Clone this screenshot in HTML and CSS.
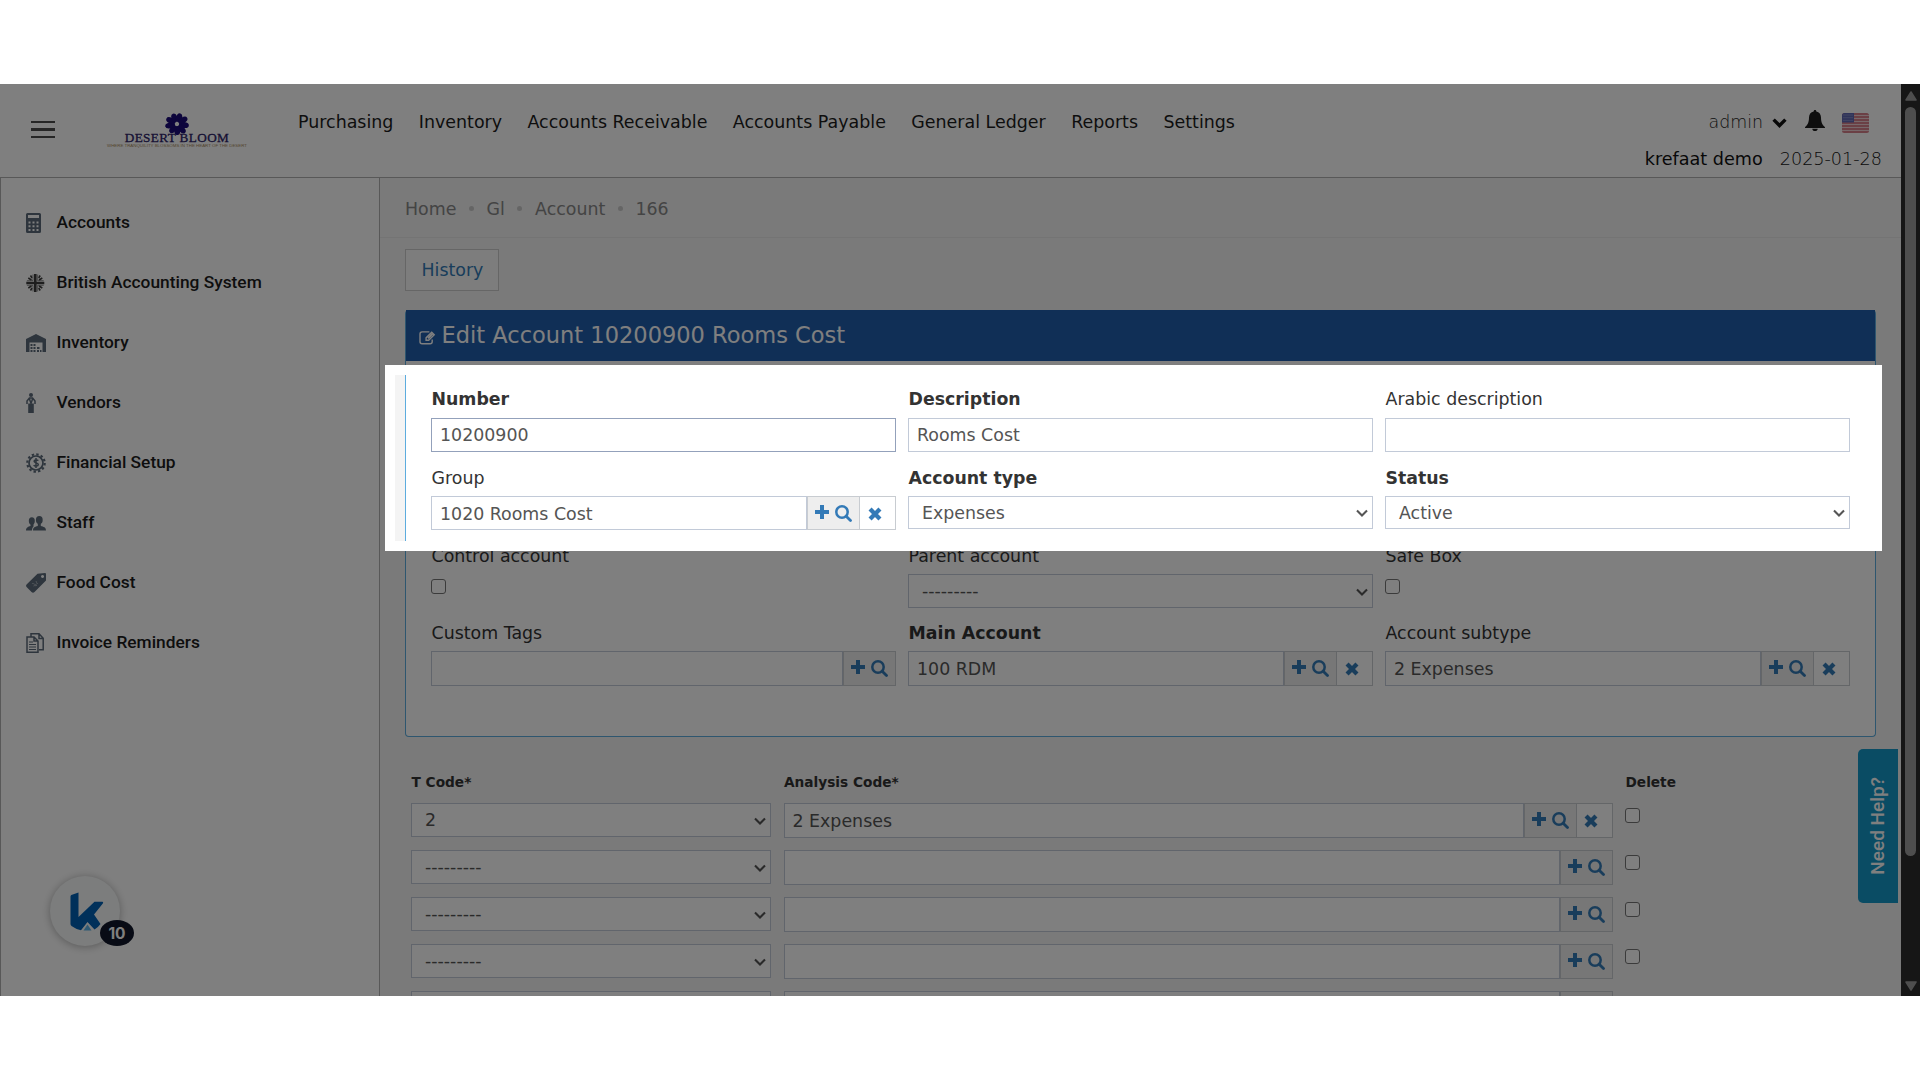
FILE: index.html
```html
<!DOCTYPE html>
<html lang="en">
<head>
<meta charset="utf-8">
<title>Edit Account</title>
<link rel="stylesheet" href="styles.css">
</head>
<body>
<svg class="sprite" aria-hidden="true">
  <symbol id="plus" viewBox="0 0 14 14"><path d="M5 0h4v5h5v4H9v5H5V9H0V5h5z"/></symbol>
  <symbol id="search" viewBox="0 0 17 17"><circle cx="7" cy="7" r="5.7" fill="none" stroke="currentColor" stroke-width="2.5"/><path d="M11.2 11.2l4.3 4.3" stroke="currentColor" stroke-width="2.8" stroke-linecap="round"/></symbol>
  <symbol id="times" viewBox="0 0 13 13"><path d="M1.900 1.900l9.200 9.200M11.100 1.900l-9.200 9.200" stroke="currentColor" stroke-width="4"/></symbol>
  <symbol id="chev" viewBox="0 0 12 8"><path d="M1 1.4l5 5 5-5" fill="none" stroke="currentColor" stroke-width="2.1"/></symbol>
</svg>
<div class="stage">
  <div class="page">
    <header class="top">
      <div class="burger"><i></i><i></i><i></i></div>
      <div class="logo">
        <svg width="28" height="22" viewBox="-14 -11.500 28 23">
          <g fill="#1a0a78"><ellipse cx="7.3" rx="5.2" ry="3.1" transform="rotate(8)"/><ellipse cx="7.3" rx="5.2" ry="3.1" transform="rotate(48)"/><ellipse cx="6.900" rx="4.700" ry="3.1" transform="rotate(88)"/><ellipse cx="6.900" rx="4.700" ry="3.1" transform="rotate(128)"/><ellipse cx="7.3" rx="5.2" ry="3.1" transform="rotate(168)"/><ellipse cx="7.3" rx="5.2" ry="3.1" transform="rotate(208)"/><ellipse cx="6.900" rx="4.700" ry="3.1" transform="rotate(248)"/><ellipse cx="6.900" rx="4.700" ry="3.1" transform="rotate(288)"/><ellipse cx="7.3" rx="5.2" ry="3.1" transform="rotate(328)"/></g>
        </svg>
        <b>DESERT BLOOM</b>
        <small>WHERE TRANQUILITY BLOSSOMS IN THE HEART OF THE DESERT</small>
      </div>
      <nav class="menu"><a>Purchasing</a><a>Inventory</a><a>Accounts Receivable</a><a>Accounts Payable</a><a>General Ledger</a><a>Reports</a><a>Settings</a></nav>
      <div class="user">
        <div class="user-row first">
          <span class="thin">admin</span>
          <svg class="u-chev" width="15" height="10" viewBox="0 0 15 10"><path d="M1.6 1.6l5.9 5.9 5.9-5.9" fill="none" stroke="#111" stroke-width="3.4"/></svg>
          <svg class="bell" width="20" height="21" viewBox="0 0 20 21"><path d="M10 0c.9 0 1.4.6 1.3 1.5 3 .6 4.700 3 4.700 6 0 5 1.500 7.500 4 9.700V18H0v-.8c2.500-2.200 4-4.700 4-9.700 0-3 1.700-5.400 4.700-6C8.600.6 9.100 0 10 0zM7.300 18.700h5.400c0 1.400-1.200 2.300-2.700 2.300s-2.700-.9-2.700-2.300z" fill="#1c1c1c"/></svg>
          <svg class="flag" width="27" height="20" viewBox="0 0 27 20"><clipPath id="fc"><rect width="27" height="20" rx="2.500"/></clipPath><g clip-path="url(#fc)"><rect width="27" height="20" fill="#efd0d4"/><path d="M0 1h27M0 4h27M0 7h27M0 10h27M0 13h27M0 16h27M0 19h27" stroke="#cf6672" stroke-width="1.700"/><rect width="12" height="9.500" fill="#6068b4"/><path d="M1.500 2h9M1.500 4.700h9M1.500 7.400h9" stroke="#a9aed8" stroke-width="1" stroke-dasharray="1 1"/></g></svg>
        </div>
        <div class="user-row second"><span>krefaat demo</span><span class="thin">2025-01-28</span></div>
      </div>
    </header>
    <div class="body">
      <aside class="side">
        <a><svg width="20" height="20" viewBox="0 0 20 20"><path fill-rule="evenodd" d="M1.500 0h12Q15 0 15 1.500v17q0 1.500-1.500 1.500h-12Q0 20 0 18.500v-17Q0 0 1.500 0zM2 2v3h11V2zM2.500 8.500v2h2v-2zm4 0v2h2v-2zm4 0v2h2v-2zm-8 3.700v2h2v-2zm4 0v2h2v-2zm4 0v2h2v-2zm-8 3.700v2h2v-2zm4 0v2h2v-2zm4 0v2h2v-2z"/></svg><span>Accounts</span></a>
        <a><svg width="20" height="20" viewBox="0 0 20 20"><g stroke="#3c3c3c" fill="none"><path d="M9.300 1v18M.3 10h18" stroke-width="2.600"/><path d="M7 1.500v6.200H.9M11.700 1.500v6.200h6M7 18.500v-6.200H.9M11.700 18.500v-6.200h6" stroke-width=".6"/><path d="M2.300 5l3.200 2M16.300 5l-3.200 2M2.300 15l3.200-2M16.300 15l-3.200-2M4.500 2.500l1.500 2.500M14.200 2.500l-1.500 2.500M4.500 17.500l1.500-2.500M14.200 17.500l-1.500-2.500" stroke-width="1.500"/></g></svg><span>British Accounting System</span></a>
        <a><svg width="20" height="20" viewBox="0 0 20 20"><path d="M0 6l10-5 10 5v13h-3.500V9.500h-13V19H0z"/><path d="M4.500 11h2v2h-2zM7.500 11h2v2h-2zM4.500 14h2v2h-2zM7.500 14h2v2h-2zM11 14h2.500v2H11zM4.500 17h2v2h-2zM7.500 17h2v2h-2zM11 17h2v2h-2zM14 17h1.500v2H14z"/></svg><span>Inventory</span></a>
        <a><svg width="20" height="20" viewBox="0 0 20 20"><circle cx="5" cy="2" r="2"/><path d="M2.200 10.500h5.600V20H2.200z"/><path d="M1 11V8l2.400-3h3.200L9 8v3M3.300 5.500l1.700 5 1.700-5" fill="none" stroke="#5c6b7a" stroke-width="1.500"/></svg><span>Vendors</span></a>
        <a><svg width="20" height="20" viewBox="0 0 20 20"><circle cx="10" cy="10" r="8.700" fill="none" stroke="#5c6b7a" stroke-width="2.200" stroke-dasharray="2.400 2.155"/><circle cx="10" cy="10" r="7" fill="none" stroke="#5c6b7a" stroke-width="1.700"/><path d="M12.300 7.700c-.6-1-4.200-1.300-4.200.6 0 2 4.200 1.200 4.200 3.300 0 2-3.800 1.900-4.600.5M10 5v10" fill="none" stroke="#5c6b7a" stroke-width="1.500"/></svg><span>Financial Setup</span></a>
        <a><svg width="20" height="20" viewBox="0 0 20 20"><ellipse cx="5.800" cy="8" rx="3" ry="3.700"/><path d="M0 17.500c0-3 2-3.800 4.500-4.500v-3h3v3.500c-1 1-1.500 2-1.500 4z"/><ellipse cx="13.300" cy="7" rx="3.400" ry="4"/><path d="M7 17.500c0-3.200 2-3.800 4.800-4.500v-3h3v3c2.800.7 5.200 1.300 5.200 4.500z"/></svg><span>Staff</span></a>
        <a><svg width="20" height="20" viewBox="0 0 20 20"><path fill-rule="evenodd" d="M11.500.8L19 0q1 0 1 1v6.500L8.500 19q-1.500 1.500-3 0L.8 14.300q-1.500-1.500 0-3zM16.500 2a1.500 1.500 0 1 0 .1 0z"/><path d="M6 11c1-2 3 2 4.500 0M7.500 13c1-1 2 .5 3.500-1M10.500 8c-1 1 .5 1.500 1 3" fill="none" stroke="#aab2ba" stroke-width="1"/></svg><span>Food Cost</span></a>
        <a><svg width="20" height="20" viewBox="0 0 20 20"><path d="M1 4h7l4 4v11.200H1z M8 4v4h4 M5 3.500V.8h8l4.200 4.500v11.500H13 M13 1v4.500h4" fill="none" stroke="#5c6b7a" stroke-width="1.500"/><path d="M3 9h4M3 11.500h7M3 14h7M3 16.500h7" stroke="#5c6b7a" stroke-width="1.200"/></svg><span>Invoice Reminders</span></a>
      </aside>
      <main class="main">
        <div class="crumbs"><span>Home</span><i></i><span>Gl</span><i></i><span>Account</span><i></i><span>166</span></div>
        <div class="content">
          <a class="history">History</a>
          <section class="panel">
            <h1><svg width="17" height="15" viewBox="0 0 18 16" fill="none" stroke="currentColor"><path d="M11 2H3.200Q1 2 1 4.200v8.300q0 2.200 2.200 2.200h8.600q2.200 0 2.200-2.200V10" stroke-width="1.500"/><path d="M7.500 8.300l6-6 2.700 2.700-6 6H7.500z" stroke-width="1.500"/><path d="M9.500 8.800l5-5" stroke-width="2.200"/></svg>Edit Account 10200900 Rooms Cost</h1>
            <div class="form">
              <div class="fld r1"><label class="req">Number</label><div class="inp focus">10200900</div></div>
              <div class="fld r1"><label class="req">Description</label><div class="inp">Rooms Cost</div></div>
              <div class="fld r1"><label>Arabic description</label><div class="inp"></div></div>

              <div class="fld"><label>Group</label><div class="grp"><div class="inp">1020 Rooms Cost</div><div class="add"><svg class="p"><use href="#plus"/></svg><svg class="s"><use href="#search"/></svg></div><div class="clr"><svg><use href="#times"/></svg></div></div></div>
              <div class="fld"><label class="req">Account type</label><div class="sel short">Expenses<svg><use href="#chev"/></svg></div></div>
              <div class="fld"><label class="req">Status</label><div class="sel short">Active<svg><use href="#chev"/></svg></div></div>

              <div class="fld"><label>Control account</label><div class="chk"></div></div>
              <div class="fld"><label>Parent account</label><div class="sel">---------<svg><use href="#chev"/></svg></div></div>
              <div class="fld"><label>Safe Box</label><div class="chk"></div></div>

              <div class="fld r4"><label>Custom Tags</label><div class="grp tall"><div class="inp"></div><div class="add"><svg class="p"><use href="#plus"/></svg><svg class="s"><use href="#search"/></svg></div></div></div>
              <div class="fld r4"><label class="req">Main Account</label><div class="grp tall"><div class="inp">100 RDM</div><div class="add"><svg class="p"><use href="#plus"/></svg><svg class="s"><use href="#search"/></svg></div><div class="clr"><svg><use href="#times"/></svg></div></div></div>
              <div class="fld r4"><label>Account subtype</label><div class="grp tall"><div class="inp">2 Expenses</div><div class="add"><svg class="p"><use href="#plus"/></svg><svg class="s"><use href="#search"/></svg></div><div class="clr"><svg><use href="#times"/></svg></div></div></div>
            </div>
          </section>
          <section class="codes">
            <div class="row head"><b>T Code*</b><b>Analysis Code*</b><b>Delete</b></div>
            <div class="row"><div class="sel">2<svg><use href="#chev"/></svg></div><div class="grp tall"><div class="inp">2 Expenses</div><div class="add"><svg class="p"><use href="#plus"/></svg><svg class="s"><use href="#search"/></svg></div><div class="clr"><svg><use href="#times"/></svg></div></div><div class="chk"></div></div>
            <div class="row"><div class="sel">---------<svg><use href="#chev"/></svg></div><div class="grp tall"><div class="inp"></div><div class="add"><svg class="p"><use href="#plus"/></svg><svg class="s"><use href="#search"/></svg></div></div><div class="chk"></div></div>
            <div class="row"><div class="sel">---------<svg><use href="#chev"/></svg></div><div class="grp tall"><div class="inp"></div><div class="add"><svg class="p"><use href="#plus"/></svg><svg class="s"><use href="#search"/></svg></div></div><div class="chk"></div></div>
            <div class="row"><div class="sel">---------<svg><use href="#chev"/></svg></div><div class="grp tall"><div class="inp"></div><div class="add"><svg class="p"><use href="#plus"/></svg><svg class="s"><use href="#search"/></svg></div></div><div class="chk"></div></div>
            <div class="row"><div class="sel"></div><div class="grp tall"><div class="inp"></div><div class="add"></div></div></div>
          </section>
        </div>
      </main>
    </div>
  </div>
  <div class="scroll">
    <svg width="12" height="10" viewBox="0 0 12 10"><path d="M6 1l5 8H1z" stroke="#9c9c9c" stroke-width="1.500" stroke-linejoin="round"/></svg>
    <div class="thumb"></div>
    <svg width="12" height="10" viewBox="0 0 12 10"><path d="M6 9l5-8H1z" stroke="#9c9c9c" stroke-width="1.500" stroke-linejoin="round"/></svg>
  </div>
  <div class="help"><span>Need Help?</span></div>
  <div class="chat">
    <svg width="34" height="40" viewBox="0 0 34 40"><path d="M.5 4.500Q.500 3.600 1.300 3L8.500.5V25L24.500 9.800h8q1 .3.500 1.500L24 22.500l6.500 9.500q-2 3-6 5.500L17.500 30l-6.500 8.200Q5.500 37 1.500 34q-1-1-1-2z" fill="#0060b4"/><path d="M17.500 32.500l4 6h-8z" fill="#5fb4e8"/></svg>
    <b>10</b>
  </div>
  <div class="spotlight"></div>
</div>
</body>
</html>
```
FILE: styles.css
```css
* { box-sizing: border-box; }
body { margin: 0; background: #fff; font: 17.4px/24px "DejaVu Sans", Verdana, sans-serif; color: #333; }
.sprite { display: none; }
svg { display: block; flex: none; }
.stage { position: relative; display: flex; width: 1920px; height: 912px; margin-top: 84px; overflow: hidden; background: #fff; }
.page { width: 1901px; height: 912px; display: flex; flex-direction: column; overflow: hidden; }

.top { height: 94px; flex: none; display: flex; border-bottom: 1px solid #b0b0b0; color: #1c1c1c; }
.burger { width: 24px; height: 17px; margin: 37px 0 0 31px; display: flex; flex-direction: column; justify-content: space-between; }
.burger i { height: 2px; background: #4c4c4c; }
.burger i:nth-child(2) { height: 3px; }
.logo { width: 140px; margin: 29px 0 0 52px; display: flex; flex-direction: column; align-items: center; white-space: nowrap; }
.logo b { font: 13.2px/12px "Liberation Serif", serif; letter-spacing: .4px; color: #2c2268; -webkit-text-stroke: .3px #2c2268; margin-top: -3px; }
.logo small { font: 4.4px/5px "Liberation Sans", sans-serif; color: #a98c60; margin-top: -1px; }
.menu { display: flex; gap: 25.4px; margin: 26px 0 0 51px; font-size: 17.46px; white-space: nowrap; }
.user { margin-left: auto; margin-right: 19px; }
.user-row { display: flex; justify-content: flex-end; white-space: nowrap; }
.thin { font-family: "DejaVu Sans Light", "DejaVu Sans", sans-serif; font-weight: 200; }
.first { margin: 26px 13px 0 0; }
.u-chev { margin: 8px 18px 0 9px; }
.bell { margin: 0 17px 0 0; }
.flag { margin-top: 3px; }
.second { gap: 17px; margin-top: 13px; font-size: 17.6px; color: #111; }

.body { flex: 1; display: flex; min-height: 0; }
.side { width: 380px; flex: none; border: solid #b0b0b0; border-width: 0 1px; padding: 15px 0 0 25px; }
.side a { display: flex; align-items: center; gap: 10.5px; height: 60px; font: 500 17.33px/24px Roboto, sans-serif; color: #1c1c1c; white-space: nowrap; }
.side span { padding-bottom: 2px; }
.side svg { fill: #5c6b7a; }
.main { flex: 1; background: #f4f4f4; min-width: 0; overflow: hidden; }
.crumbs { height: 60px; display: flex; align-items: center; gap: 12.6px; padding: 2px 0 0 25px; border-bottom: 1px solid #e9e9e9; color: #888; }
.crumbs i { width: 5px; height: 5px; border-radius: 50%; background: #cbcbcb; }
.content { padding: 11px 25px 0; }
.history { display: block; width: 94px; height: 42px; border: 1px solid #ccc; background: #fafafa; line-height: 40px; padding-left: 15.5px; color: #337ab7; }

.panel { width: 1471px; height: 427px; margin-top: 19px; border: 1px solid #5cacde; border-top: 0; border-radius: 4px; background: #fff; }
.panel h1 { display: flex; align-items: center; gap: 6px; height: 51px; margin: 0; padding-left: 12.5px; font-weight: 400; font-size: 22.52px; line-height: 51px; background: #205eac; color: #fff; white-space: nowrap; }
.panel h1 svg { margin-top: 3px; }
.form { display: grid; grid-template-columns: repeat(3, 465px); grid-template-rows: 79px 78px 78px 90px; column-gap: 12px; padding: 25px 25px 0; }
.fld label { display: block; height: 25px; padding: 1px 0 0 .5px; margin-bottom: 6px; white-space: nowrap; }
.r1 label { margin-bottom: 7px; }
.r4 label { margin-bottom: 5px; padding-top: 0; }
.req { font-weight: 700; font-size: 17.35px; }
.inp, .sel { height: 34px; border: 1px solid #c2cad8; background: #fff; color: #555; padding-left: 8px; line-height: 33px; white-space: nowrap; }
.focus { border-color: #93a1bb; }
.sel { display: flex; justify-content: space-between; padding: 0 4px 0 13px; }
.sel svg { width: 12px; height: 8px; margin-top: 13px; }
.short { height: 33px; }
.short svg { margin-top: 12px; }
.grp { display: flex; height: 34px; color: #337ab7; }
.grp .inp { flex: 1; height: 100%; line-height: 34px; }
.tall { height: 35px; }
.add { width: 53px; flex: none; display: flex; gap: 6px; border: 1px solid #c8ccd1; background: #eee; padding: 8px 0 0 7.4px; }
.clr { width: 36px; flex: none; border: 1px solid #c8ccd1; border-left: 0; background: #fff; padding: 9.5px 0 0 7.5px; }
.grp svg { fill: #337ab7; }
.p { width: 14px; height: 14px; }
.s { width: 17px; height: 17px; }
.clr svg { width: 14px; height: 14px; }
.chk { width: 15px; height: 15px; margin-top: 11px; border: 1px solid #767676; border-radius: 3px; background: #fff; }

.codes { padding: 27px 0 0 6px; }
.row { display: grid; grid-template-columns: 360px 829px 60px; column-gap: 12.500px; height: 47px; }
.head { height: 39px; padding-top: 6px; font-size: 13.7px; line-height: 24px; }
.head b { padding-left: .5px; }
.codes .chk { margin-top: 5px; }

.scroll { width: 19px; background: #2c2c2c; display: flex; flex-direction: column; align-items: center; padding: 7px 0 5px; }
.scroll svg { fill: #9c9c9c; }
.thumb { width: 11px; height: 749px; margin: 6px 0 auto; border-radius: 6px; background: #9c9c9c; }

.help { position: absolute; left: 1858px; top: 665px; width: 40px; height: 154px; border-radius: 5px 0 0 5px; background: #1498c8; color: #fff; display: flex; align-items: center; justify-content: center; font: 500 19px/24px Roboto, sans-serif; }
.help span { writing-mode: vertical-rl; transform: rotate(180deg); white-space: nowrap; }
.chat { position: absolute; left: 50px; top: 792px; width: 70px; height: 70px; border-radius: 50%; background: #f8fafa; box-shadow: 0 1px 8px rgba(0, 0, 0, .3); padding: 16px 0 0 20px; }
.chat b { position: absolute; left: 50px; top: 44px; width: 34px; height: 26px; border-radius: 50%; background: #10162a; color: #fff; font: 700 15.5px/27px Inter, sans-serif; text-align: center; }
.spotlight { position: absolute; left: 385px; top: 281px; width: 1497px; height: 186px; border: 10px solid #fff; box-shadow: 0 0 0 2000px rgba(0, 0, 0, .5); }
```
